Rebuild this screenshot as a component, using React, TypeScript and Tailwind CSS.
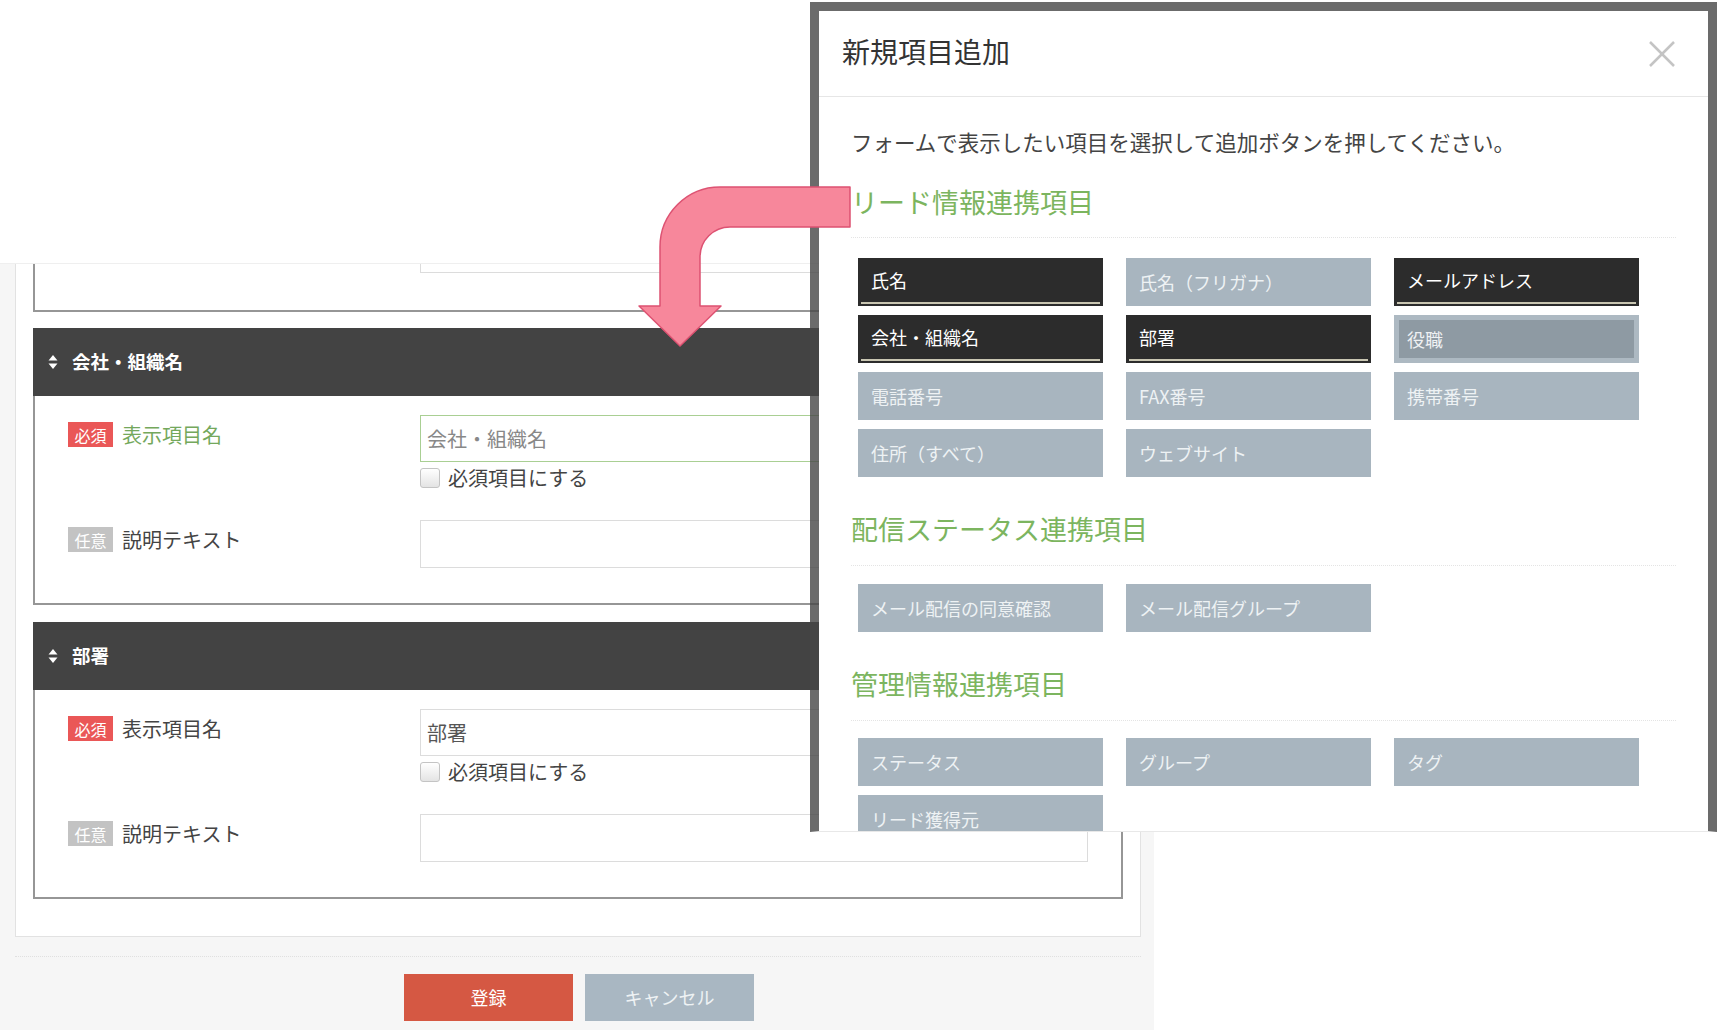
const jp = { fontFamily: '"Noto Sans CJK JP", "Noto Sans", sans-serif' };

function SortIcon() {
  return (
    <svg width="10" height="16" viewBox="0 0 10 16" fill="#ffffff">
      <polygon points="5,1 9.5,6.5 0.5,6.5" />
      <polygon points="5,15 9.5,9.5 0.5,9.5" />
    </svg>
  );
}

function Badge({ kind }: { kind: "req" | "opt" }) {
  return (
    <span
      className={
        "inline-flex h-[25px] w-[45px] items-center justify-center text-[16px] leading-none text-white " +
        (kind === "req" ? "bg-[#ea5757]" : "bg-[#c3c3c3]")
      }
    >
      {kind === "req" ? "必須" : "任意"}
    </span>
  );
}

function Section({
  title,
  value,
  focused,
}: {
  title: string;
  value: string;
  focused?: boolean;
}) {
  return (
    <div>
      <div className="flex h-[68px] items-center gap-[14px] bg-[#434343] pl-[15px]">
        <SortIcon />
        <span className="text-[18.5px] font-bold text-white">{title}</span>
      </div>
      <div className="h-[209px] border-x-2 border-b-2 border-[#969696] pt-[19px]">
        <div className="flex items-start">
          <div className="mt-[7px] flex w-[385px] items-center gap-[9px] pl-[33px]">
            <Badge kind="req" />
            <span
              className={
                "text-[20px] leading-[25px] " + (focused ? "text-[#74a85c]" : "text-[#444]")
              }
            >
              表示項目名
            </span>
          </div>
          <div>
            <div
              className={
                "flex h-[47px] w-[668px] items-center border bg-white pl-[6px] text-[20px] " +
                (focused ? "border-[#a9cf93] text-[#888]" : "border-[#dcdcdc] text-[#555]")
              }
            >
              {value}
            </div>
            <div className="mt-[6px] flex h-[20px] items-center gap-[8px]">
              <span className="h-[20px] w-[20px] rounded-[3px] border border-[#c4c4c4] bg-gradient-to-b from-white to-[#e4e4e4]" />
              <span className="text-[20px] text-[#444]">必須項目にする</span>
            </div>
          </div>
        </div>
        <div className="mt-[32px] flex items-start">
          <div className="mt-[7px] flex w-[385px] items-center gap-[9px] pl-[33px]">
            <Badge kind="opt" />
            <span className="text-[20px] leading-[25px] text-[#444]">説明テキスト</span>
          </div>
          <div className="h-[48px] w-[668px] border border-[#dcdcdc] bg-white" />
        </div>
      </div>
    </div>
  );
}

type Item = { label: string; state: "on" | "off" | "sel" };

function ItemButton({ item }: { item: Item }) {
  if (item.state === "on") {
    return (
      <div className="flex h-[48px] w-[245px] flex-col bg-[#2c2c2c] px-[3px] pb-[2px]">
        <div className="flex flex-1 items-center pl-[10px] text-[18px] text-white">{item.label}</div>
        <div className="h-[2px] bg-[#c9c6b2]" />
      </div>
    );
  }
  if (item.state === "sel") {
    return (
      <div className="h-[48px] w-[245px] bg-[#adb9c2] p-[5px]">
        <div className="flex h-full items-center bg-[#8e9aa3] pl-[8px] text-[18px] text-[#eef1f3]">
          {item.label}
        </div>
      </div>
    );
  }
  return (
    <div className="flex h-[48px] w-[245px] items-center bg-[#a8b5bf] pl-[13px] text-[18px] text-[#eef2f4]">
      {item.label}
    </div>
  );
}

function ItemGrid({ items }: { items: Item[] }) {
  return (
    <div className="grid grid-cols-[245px_245px_245px] gap-x-[23px] gap-y-[9px] pl-[7px]">
      {items.map((it) => (
        <ItemButton key={it.label} item={it} />
      ))}
    </div>
  );
}

function Heading({ children }: { children: string }) {
  return <div className="text-[27px] leading-[36px] text-[#7cb55f]">{children}</div>;
}

function Divider() {
  return <div className="border-t border-dotted border-[#e4e4e4]" />;
}

export default function App() {
  const lead: Item[] = [
    { label: "氏名", state: "on" },
    { label: "氏名（フリガナ）", state: "off" },
    { label: "メールアドレス", state: "on" },
    { label: "会社・組織名", state: "on" },
    { label: "部署", state: "on" },
    { label: "役職", state: "sel" },
    { label: "電話番号", state: "off" },
    { label: "FAX番号", state: "off" },
    { label: "携帯番号", state: "off" },
    { label: "住所（すべて）", state: "off" },
    { label: "ウェブサイト", state: "off" },
  ];
  const mail: Item[] = [
    { label: "メール配信の同意確認", state: "off" },
    { label: "メール配信グループ", state: "off" },
  ];
  const manage: Item[] = [
    { label: "ステータス", state: "off" },
    { label: "グループ", state: "off" },
    { label: "タグ", state: "off" },
    { label: "リード獲得元", state: "off" },
  ];

  return (
    <div className="relative h-[1030px] w-[1720px] overflow-hidden bg-white" style={jp}>
      {/* form page behind */}
      <div className="mt-[263px] h-[767px] w-[1154px] border-t border-[#efefef] bg-[#f6f6f6]">
        <div className="mx-[15px] h-[673px] w-[1126px] border-x border-b border-[#e2e2e2] bg-white px-[17px]">
          <div className="h-[48px] border-x-2 border-b-2 border-[#969696]">
            <div className="ml-[385px] h-[9px] w-[668px] border-x border-b border-[#dcdcdc]" />
          </div>
          <div className="mt-[16px]">
            <Section title="会社・組織名" value="会社・組織名" focused />
          </div>
          <div className="mt-[17px]">
            <Section title="部署" value="部署" />
          </div>
        </div>
        <div className="mx-[15px] mt-[19px] w-[1126px] border-t border-dotted border-[#e0e0e0]" />
        <div className="mt-[17px] flex justify-center gap-[12px] pl-[4px]">
          <button className="h-[47px] w-[169px] bg-[#d55843] text-[18px] text-white">登録</button>
          <button className="h-[47px] w-[169px] bg-[#a9b7c2] text-[18px] text-[#eef2f4]">キャンセル</button>
        </div>
      </div>

      {/* modal */}
      <div className="absolute left-[810px] top-[2px] h-[830px] w-[907px] overflow-hidden border-x-[9px] border-t-[9px] border-b border-[#474747]/80 border-b-[#e8e8e8] bg-white bg-clip-padding">
        <div className="flex h-[86px] items-center justify-between border-b border-[#e6e6e6] pl-[23px] pr-[32px]">
          <span className="mb-[6px] text-[28px] text-[#333]">新規項目追加</span>
          <svg width="28" height="28" viewBox="0 0 28 28" stroke="#c4c4c4" strokeWidth="2.5">
            <line x1="2" y1="2" x2="26" y2="26" />
            <line x1="26" y1="2" x2="2" y2="26" />
          </svg>
        </div>
        <div className="pl-[32px] pr-[32px] pt-[30px]">
          <div className="text-[21.5px] leading-[30px] text-[#444]">
            フォームで表示したい項目を選択して追加ボタンを押してください。
          </div>
          <div className="mt-[27px]">
            <Heading>リード情報連携項目</Heading>
          </div>
          <div className="mt-[17px]">
            <Divider />
          </div>
          <div className="mt-[20px]">
            <ItemGrid items={lead} />
          </div>
          <div className="mt-[34px]">
            <Heading>配信ステータス連携項目</Heading>
          </div>
          <div className="mt-[18px]">
            <Divider />
          </div>
          <div className="mt-[18px]">
            <ItemGrid items={mail} />
          </div>
          <div className="mt-[34px]">
            <Heading>管理情報連携項目</Heading>
          </div>
          <div className="mt-[18px]">
            <Divider />
          </div>
          <div className="mt-[17px]">
            <ItemGrid items={manage} />
          </div>
        </div>
      </div>

      {/* pink arrow */}
      <svg
        className="pointer-events-none absolute left-0 top-0"
        width="1720"
        height="1030"
        viewBox="0 0 1720 1030"
      >
        <path
          d="M850 187 H720 A60 60 0 0 0 660 247 V306 H639 L680 346 L721 306 H700 V257 A30 30 0 0 1 730 227 H850 Z"
          fill="#f7879b"
          stroke="#dd5272"
          strokeWidth="1.5"
          strokeLinejoin="round"
        />
      </svg>
    </div>
  );
}
